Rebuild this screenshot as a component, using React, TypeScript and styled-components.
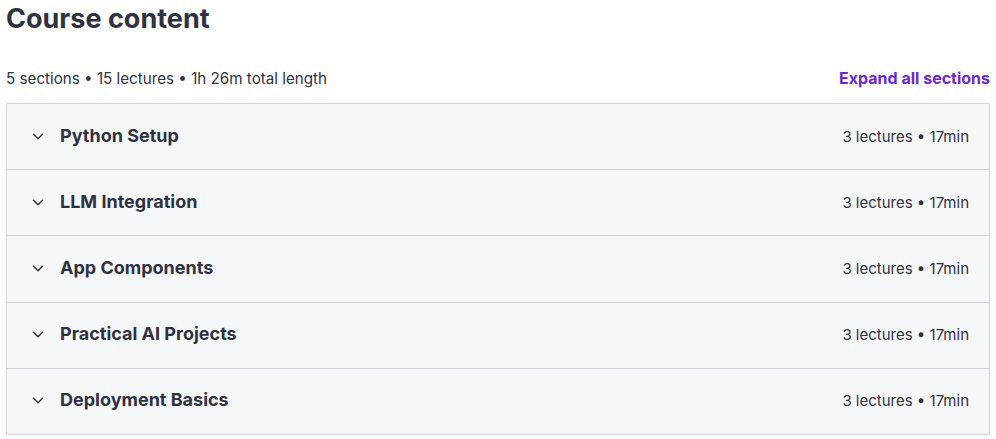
import React from 'react'
import styled, { createGlobalStyle } from 'styled-components'

const GlobalStyle = createGlobalStyle`
  * { box-sizing: border-box; }
  body {
    margin: 0;
    background: #fff;
    font-family: Inter, "Noto Sans", sans-serif;
    color: #303141;
  }
`

const sections = [
  { title: 'Python Setup', lectures: 3, length: '17min' },
  { title: 'LLM Integration', lectures: 3, length: '17min' },
  { title: 'App Components', lectures: 3, length: '17min' },
  { title: 'Practical AI Projects', lectures: 3, length: '17min' },
  { title: 'Deployment Basics', lectures: 3, length: '17min' },
]

const Chevron = () => (
  <svg width="12" height="7" viewBox="0 0 12 7" fill="none" stroke="#303141" strokeWidth="1.5" strokeLinecap="round" strokeLinejoin="round">
    <path d="M1.5 1.25l4.5 4.5 4.5-4.5" />
  </svg>
)

const App = () => {
  return (
    <>
      <GlobalStyle />
      <Wrapper>
        <Heading>Course content</Heading>
        <Summary>
          <Stats>5 sections • 15 lectures • 1h 26m total length</Stats>
          <ExpandAll>Expand all sections</ExpandAll>
        </Summary>
        <Panel>
          {sections.map((s) => (
            <Row key={s.title}>
              <RowLeft>
                <ChevronBox><Chevron /></ChevronBox>
                <RowTitle>{s.title}</RowTitle>
              </RowLeft>
              <RowMeta>{s.lectures} lectures • {s.length}</RowMeta>
            </Row>
          ))}
        </Panel>
      </Wrapper>
    </>
  )
}

export default App

const Wrapper = styled.div`
  width: 990px;
  padding-left: 6px;
`

const Heading = styled.h2`
  margin: 0;
  padding-top: 1px;
  font-size: 27px;
  line-height: 35px;
  font-weight: 700;
  color: #303141;
`

const Summary = styled.div`
  display: flex;
  justify-content: space-between;
  align-items: center;
  margin-top: 30px;
  height: 24px;
  margin-bottom: 13px;
`

const Stats = styled.span`
  font-size: 15.2px;
  color: #303141;
`

const ExpandAll = styled.button`
  border: none;
  background: none;
  padding: 0;
  font-family: inherit;
  font-size: 16px;
  font-weight: 700;
  color: #6d28d2;
  cursor: pointer;
`

const Panel = styled.div`
  border: 1px solid #d1d2e0;
  border-bottom: none;
  border-radius: 2px 2px 0 0;
  overflow: hidden;
`

const Row = styled.div`
  display: flex;
  align-items: center;
  justify-content: space-between;
  height: 66.2px;
  padding: 0 20px 3px 25px;
  background: #f6f7f9;
  border-bottom: 1px solid #d1d2e0;
`

const RowLeft = styled.div`
  display: flex;
  align-items: center;
  gap: 16px;
`

const ChevronBox = styled.span`
  display: flex;
  width: 12px;
  justify-content: center;
  padding-top: 2px;
`

const RowTitle = styled.span`
  font-size: 18px;
  font-weight: 700;
  color: #303141;
`

const RowMeta = styled.span`
  font-size: 15px;
  color: #303141;
  padding-top: 2px;
`
